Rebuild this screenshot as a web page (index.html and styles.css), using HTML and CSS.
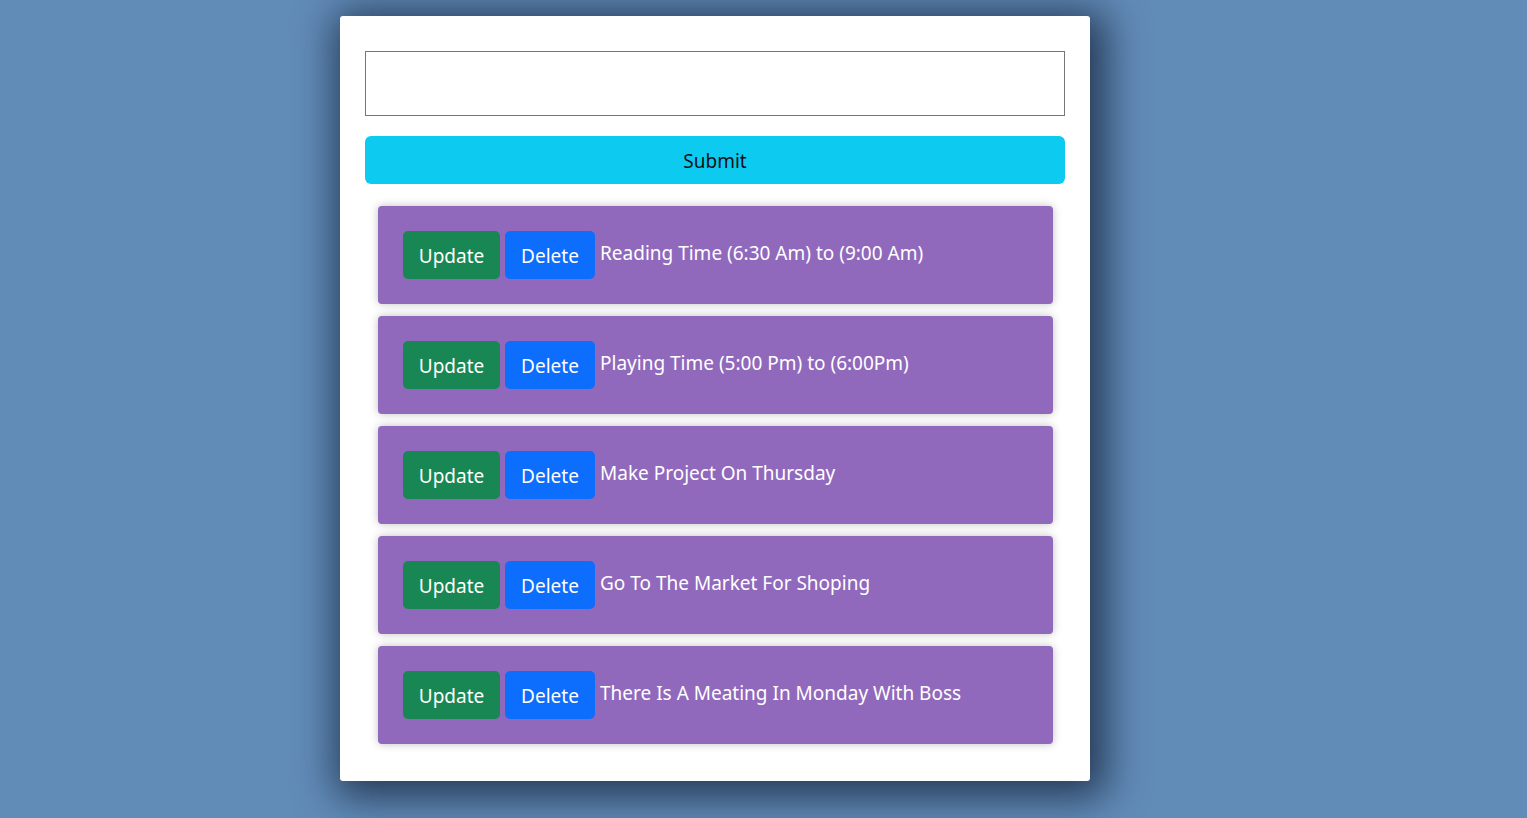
FILE: index.html
```html
<!DOCTYPE html>
<html lang="en">
<head>
<meta charset="utf-8">
<title>Todo</title>
<link rel="stylesheet" href="styles.css">
</head>
<body>
<main class="card">
  <input class="task-input" type="text">
  <button class="submit">Submit</button>
  <ul class="list">
    <li class="item"><button class="btn btn-update">Update</button><button class="btn btn-delete">Delete</button><span class="label">Reading Time (6:30 Am) to (9:00 Am)</span></li>
    <li class="item"><button class="btn btn-update">Update</button><button class="btn btn-delete">Delete</button><span class="label">Playing Time (5:00 Pm) to (6:00Pm)</span></li>
    <li class="item"><button class="btn btn-update">Update</button><button class="btn btn-delete">Delete</button><span class="label">Make Project On Thursday</span></li>
    <li class="item"><button class="btn btn-update">Update</button><button class="btn btn-delete">Delete</button><span class="label">Go To The Market For Shoping</span></li>
    <li class="item"><button class="btn btn-update">Update</button><button class="btn btn-delete">Delete</button><span class="label">There Is A Meating In Monday With Boss</span></li>
  </ul>
</main>
</body>
</html>
```
FILE: styles.css
```css
* { box-sizing: border-box; }
html, body { margin: 0; padding: 0; }
body {
  background: #628cb8;
  font-family: "Noto Sans", "Open Sans", sans-serif;
  height: 818px;
  overflow: hidden;
}
.card {
  width: 750px;
  margin: 16px 0 0 340px;
  background: #fff;
  border-radius: 3px;
  padding: 35px 25px 37px;
  box-shadow: 6px 6px 40px 10px rgba(20, 35, 60, 0.8);
  display: flex;
  flex-direction: column;
}
.task-input {
  display: block;
  width: 700px;
  height: 65px;
  border: 1px solid #767676;
  border-radius: 0;
  margin: 0;
  padding: 0 10px;
  font-size: 19px;
  font-family: inherit;
}
.submit {
  margin-top: 20px;
  height: 48px;
  border: none;
  border-radius: 6px;
  background: #0dcaf0;
  color: #111;
  font-family: inherit;
  font-size: 19px;
  padding: 2px 0 0;
}
.list {
  list-style: none;
  margin: 22px 12px 0 13px;
  padding: 0;
  display: flex;
  flex-direction: column;
  gap: 12px;
}
.item {
  height: 98px;
  background: #9169bc;
  border-radius: 4px;
  padding: 25px;
  box-shadow: 0 0 8px rgba(0, 0, 0, 0.25);
  display: flex;
  align-items: baseline;
  gap: 5px;
  color: #fff;
  font-size: 19px;
}
.label { white-space: nowrap; position: relative; top: -3px; }
.btn {
  height: 48px;
  border: none;
  border-radius: 5px;
  color: #fff;
  font-family: inherit;
  font-size: 19px;
  padding: 2px 0 0;
}
.btn-update { background: #198754; width: 97px; }
.btn-delete { background: #0d6efd; width: 90px; }
```
